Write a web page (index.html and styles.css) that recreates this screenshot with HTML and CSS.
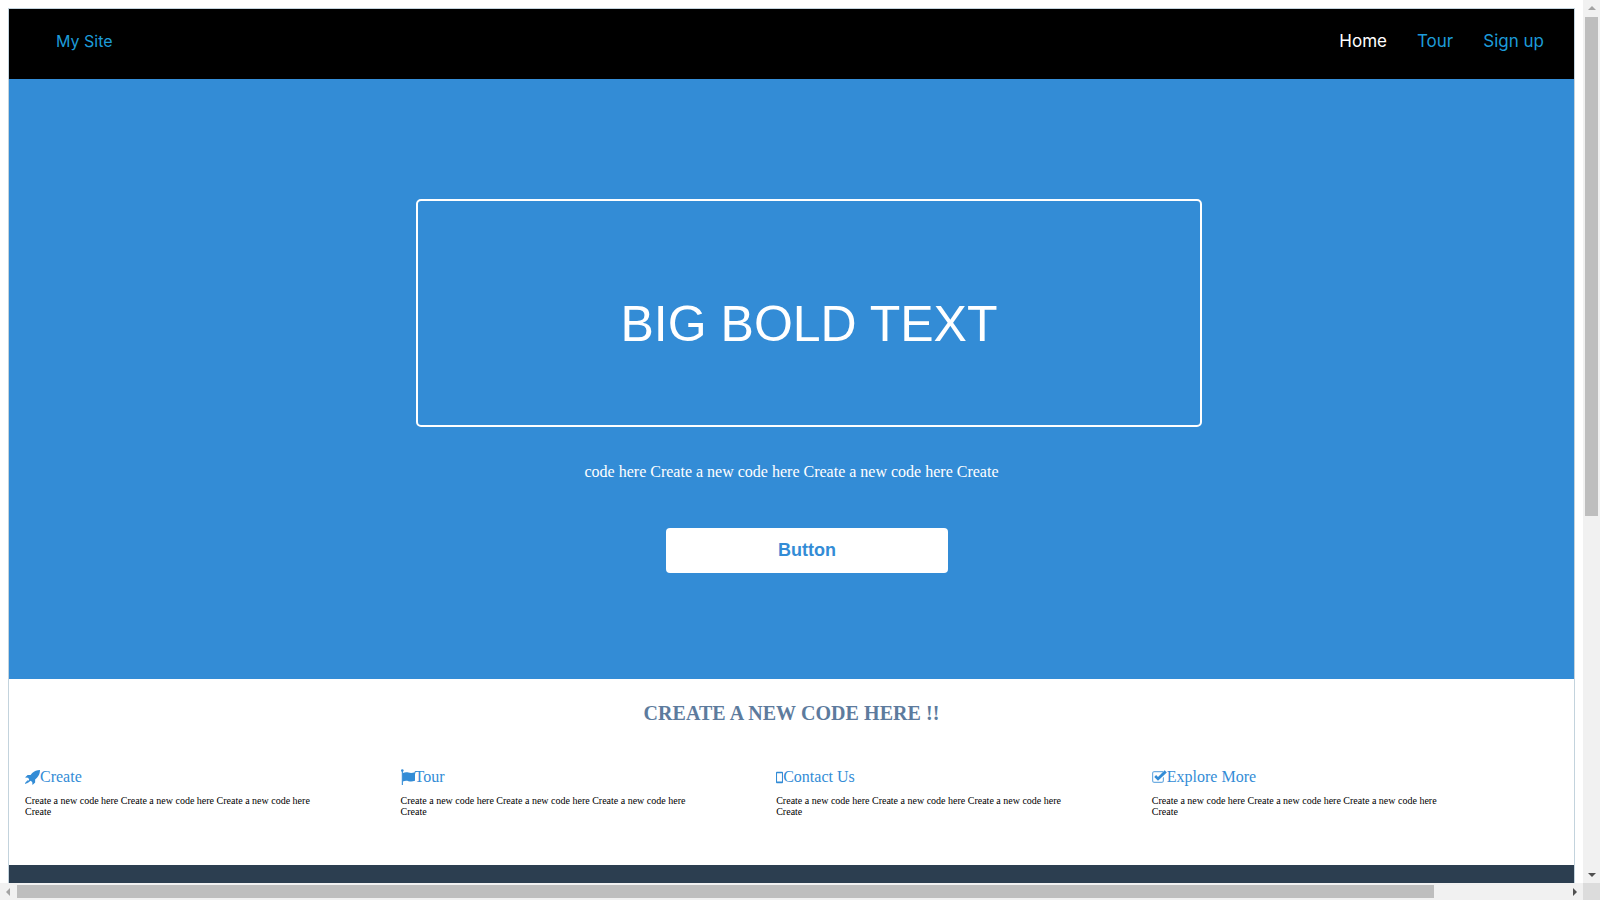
FILE: index.html
```html
<!DOCTYPE html>
<html lang="en">
<head>
    <meta charset="UTF-8">
    <title>My Site</title>
    <link rel="stylesheet" href="styles.css">
</head>
<body>
    <div class="page">
        <div class="frame">
            <nav class="topbar">
                <a class="brand" href="#">My Site</a>
                <div class="links">
                    <a class="active" href="#">Home</a>
                    <a href="#">Tour</a>
                    <a href="#">Sign up</a>
                </div>
            </nav>

            <section class="hero">
                <div class="bigbox">
                    <h1>BIG BOLD TEXT</h1>
                </div>
                <p class="lead">code here Create a new code here Create a new code here Create</p>
                <a class="btn" href="#">Button</a>
            </section>

            <section class="features">
                <h2>CREATE A NEW CODE HERE !!</h2>
                <div class="cols">
                    <div class="col">
                        <h3><svg class="ico ico-rocket" viewBox="0 0 16 16"><path d="M16 0c-3.2.1-6 1-8.300 3.200L5.900 5.200H2.800L0 8l3.300.3 1.200 1.700L2 13.500l.5.500 3.500-2.500 1.700 1.200.3 3.300 2.800-2.800v-3.100l2-1.800C15 6 15.900 3.200 16 0z"/><path d="M2.700 10.800l1 1-2.700 3-1-.300.300-1z"/></svg>Create</h3>
                        <p>Create a new code here Create a new code here Create a new code here Create</p>
                    </div>
                    <div class="col">
                        <h3><svg class="ico ico-flag" viewBox="0 0 14 16"><circle cx="1.300" cy="1.500" r="1.300"/><path d="M.800 2h1.100v14H.800z"/><path d="M1.900 4c2-1 3.800-1 5.600-.4 2 .6 4 .5 6.500-.4v8.600c-2.500 1-4.500 1-6.500.4-1.800-.6-3.600-.6-5.600.4z"/></svg>Tour</h3>
                        <p>Create a new code here Create a new code here Create a new code here Create</p>
                    </div>
                    <div class="col">
                        <h3><svg class="ico ico-phone" viewBox="0 0 8 13"><path fill-rule="evenodd" d="M1 0h6a1 1 0 0 1 1 1v11a1 1 0 0 1-1 1H1a1 1 0 0 1-1-1V1a1 1 0 0 1 1-1zm.200 1.500v9.500h5.600V1.500z"/></svg>Contact Us</h3>
                        <p>Create a new code here Create a new code here Create a new code here Create</p>
                    </div>
                    <div class="col">
                        <h3><svg class="ico ico-check" viewBox="0 0 15 14"><path opacity=".7" d="M2.500 1H11v1.200H2.500c-.8 0-1.300.5-1.300 1.300v7c0 .8.500 1.300 1.300 1.300h7c.8 0 1.300-.5 1.300-1.300V8l1.200-1.200v3.700c0 1.500-1 2.500-2.500 2.500h-7C1 13 0 12 0 10.500v-7C0 2 1 1 2.500 1z"/><path d="M6 10.800 2.200 7l1.900-1.900L6 7l6.700-6.700L14.800 2.400z"/></svg>Explore More</h3>
                        <p>Create a new code here Create a new code here Create a new code here Create</p>
                    </div>
                </div>
            </section>

            <footer class="foot"></footer>
        </div>
    </div>

    <div class="vbar">
        <span class="arrow arrow-up"></span>
        <div class="vtrack"><div class="vthumb"></div></div>
        <span class="arrow arrow-down"></span>
    </div>
    <div class="hbar">
        <span class="arrow arrow-left"></span>
        <div class="htrack"><div class="hthumb"></div></div>
        <span class="arrow arrow-right"></span>
    </div>
    <div class="corner"></div>
</body>
</html>
```

FILE: styles.css
```css
html, body {
    margin: 0;
    padding: 0;
    height: 100%;
    overflow: hidden;
}
body {
    display: grid;
    grid-template-columns: 1583px 17px;
    grid-template-rows: 883px 17px;
    background-color: #fff;
    font-family: "Liberation Serif", serif;
}
.page {
    padding: 8px 8px 0 8px;
    overflow: hidden;
}
.frame {
    border: 1px solid #c3d3dd;
    border-bottom: none;
    width: 1565px;
}

/* top bar */
.topbar {
    height: 70px;
    background-color: #000;
    display: flex;
    justify-content: space-between;
    align-items: flex-start;
    padding: 22px 30px 0 47px;
    box-sizing: border-box;
    font-family: Inter, sans-serif;
    font-size: 16px;
    line-height: 20px;
}
.topbar a {
    color: #1d9bd8;
    text-decoration: none;
}
.links {
    display: flex;
    gap: 30px;
    font-size: 17px;
}
.topbar a.active {
    color: #fff;
}

/* hero */
.hero {
    height: 600px;
    background-color: #338cd6;
    display: flex;
    flex-direction: column;
    align-items: center;
    box-sizing: border-box;
    padding-top: 120px;
    color: #fff;
}
.bigbox {
    width: 786px;
    height: 228px;
    box-sizing: border-box;
    border: 2px solid #fff;
    border-radius: 5px;
    margin-left: 35px;
    padding-top: 21px;
    display: flex;
    align-items: center;
    justify-content: center;
}
.bigbox h1 {
    margin: 0;
    font-family: "Liberation Sans", sans-serif;
    font-size: 50px;
    font-weight: 400;
    line-height: 60px;
}
.lead {
    margin: 36px 0 0;
    font-size: 16px;
    line-height: 18px;
}
.btn {
    margin: 47px 0 0 31px;
    width: 282px;
    height: 45px;
    box-sizing: border-box;
    background-color: #fff;
    border-radius: 4px;
    color: #338cd6;
    font-family: "Liberation Sans", sans-serif;
    font-size: 18px;
    font-weight: 700;
    line-height: 44px;
    text-align: center;
    text-decoration: none;
}

/* features */
.features {
    height: 186px;
    box-sizing: border-box;
    padding: 22px 0 0 16px;
}
.features h2 {
    margin: 0 0 43px -16px;
    font-size: 20px;
    letter-spacing: .07px;
    line-height: 24px;
    text-align: center;
    color: #5d7b9d;
}
.cols {
    display: grid;
    grid-template-columns: repeat(4, 375.6px);
}
.col h3 {
    margin: 0 0 9px;
    font-size: 16px;
    font-weight: 400;
    line-height: 18px;
    color: #338cd6;
    display: flex;
    align-items: center;
}
.col p {
    margin: 0;
    width: 300px;
    font-size: 10px;
    line-height: 11px;
    color: #000;
}
.ico {
    fill: #338cd6;
    flex-shrink: 0;
}
.ico-rocket {
    width: 15px;
    height: 15px;
}
.ico-flag {
    width: 14px;
    height: 16px;
}
.ico-phone {
    width: 7px;
    height: 13px;
}
.ico-check {
    width: 15px;
    height: 14px;
}
.foot {
    height: 30px;
    background-color: #2c3e50;
}

/* scrollbars */
.vbar, .hbar {
    background-color: #f1f1f1;
    display: flex;
    align-items: center;
    position: relative;
}
.vbar {
    grid-column: 2;
    grid-row: 1;
    flex-direction: column;
}
.hbar {
    grid-column: 1;
    grid-row: 2;
}
.vtrack {
    flex: 1;
    width: 100%;
    padding: 0 2px;
    box-sizing: border-box;
}
.vthumb {
    height: 499px;
    background-color: #bebebe;
}
.htrack {
    flex: 1;
    height: 100%;
    padding: 2px 0;
    box-sizing: border-box;
}
.hthumb {
    width: 1417px;
    height: 13px;
    background-color: #bebebe;
}
.arrow {
    width: 0;
    height: 0;
    flex-shrink: 0;
    border-style: solid;
    border-color: transparent;
}
.arrow-up {
    border-width: 0 4px 4px;
    border-bottom-color: #a3a3a3;
    margin: 6px 0 7px;
}
.arrow-down {
    border-width: 4px 4px 0;
    border-top-color: #505050;
    margin: 7px 0 6px;
}
.arrow-left {
    border-width: 4px 4px 4px 0;
    border-right-color: #a3a3a3;
    margin: 0 7px 0 6px;
}
.arrow-right {
    border-width: 4px 0 4px 4px;
    border-left-color: #505050;
    margin: 0 6px 0 7px;
}
.corner {
    grid-column: 2;
    grid-row: 2;
    background-color: #dcdcdc;
}
```
